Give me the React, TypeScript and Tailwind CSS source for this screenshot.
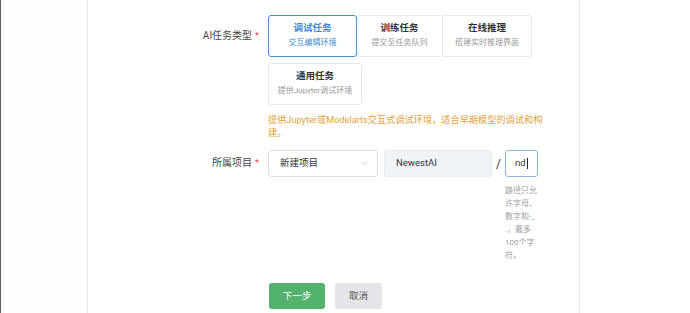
import React from 'react';

const font = { fontFamily: 'Roboto, "Noto Sans CJK SC", sans-serif' };

function TaskCard({
  title,
  desc,
  active,
  className = '',
}: {
  title: string;
  desc: string;
  active?: boolean;
  className?: string;
}) {
  return (
    <div
      className={`relative flex h-[42px] flex-col items-center rounded-[3px] border bg-white pt-[6px] ${
        active ? 'z-10 border-[#4a8fcf]' : 'border-[#e6e8ec]'
      } ${className}`}
    >
      <div className={`text-[9.5px] font-bold leading-[12px] ${active ? 'text-[#3a8ad6]' : 'text-[#333]'}`}>{title}</div>
      <div className={`mt-[4px] whitespace-nowrap text-[8px] leading-[10px] ${active ? 'text-[#3a8ad6]' : 'text-[#999]'}`}>
        {desc}
      </div>
    </div>
  );
}

function Label({ text }: { text: string }) {
  return (
    <div className="flex w-[180px] shrink-0 justify-end pr-[9px] text-[10px] leading-[14px] text-[#444]">
      <span>{text}</span>
      <span className="ml-[3px] text-[9px] text-[#e5484d]">*</span>
    </div>
  );
}

export default function App() {
  return (
    <div className="flex h-[313px] w-[690px] overflow-hidden bg-white" style={font}>
      <div className="w-px shrink-0 bg-[#5a5a5a]" />
      <div className="w-[86px] shrink-0 bg-[#fdfdfd]" />
      <div className="w-[493px] shrink-0 border-x border-[#e6e6e6] bg-white pt-[15px]">
        {/* task type */}
        <div className="flex items-start">
          <div className="mt-[14px]">
            <Label text="AI任务类型" />
          </div>
          <div className="flex flex-col">
            <div className="flex">
              <TaskCard title="调试任务" desc="交互编辑环境" active className="w-[89px]" />
              <TaskCard title="训练任务" desc="提交至任务队列" className="-ml-px w-[87px]" />
              <TaskCard title="在线推理" desc="搭建实时推理界面" className="-ml-px w-[90px]" />
            </div>
            <div className="mt-[6px] flex">
              <TaskCard title="通用任务" desc="提供Jupyter调试环境" className="w-[94px]" />
            </div>
            <p className="mt-[8px] whitespace-nowrap text-[9.2px] leading-[13px] text-[#e3a23a]">
              提供Jupyter或Modelarts交互式调试环境，适合早期模型的调试和构
              <br />
              建。
            </p>
          </div>
        </div>

        {/* project */}
        <div className="mt-[11px] flex items-start">
          <div className="mt-[6px]">
            <Label text="所属项目" />
          </div>
          <div className="flex items-start">
            <div className="flex h-[27px] w-[110px] items-center justify-between rounded-[3px] border border-[#dcdfe6] pl-[11px] pr-[9px] text-[9.5px] text-[#333]">
              <span>新建项目</span>
              <svg width="7" height="5" viewBox="0 0 7 5" fill="none">
                <path d="M0.5 0.8l3 3 3-3" stroke="#c0c4cc" strokeWidth="0.9" />
              </svg>
            </div>
            <div className="ml-[6px] flex h-[27px] w-[108px] items-center rounded-[3px] border border-[#e9edf2] bg-[#eff2f6] px-[11px] text-[9.5px] text-[#333]">
              NewestAI
            </div>
            <div className="flex h-[27px] w-[13px] items-center justify-center text-[12px] text-[#333]">/</div>
            <div className="flex flex-col">
              <div className="flex h-[27px] w-[33px] items-center rounded-[3px] border border-[#8fb6dc] pl-[9px] text-[9.5px] text-[#333]">
                nd<span className="ml-px inline-block h-[11px] w-px bg-[#222]" />
              </div>
              <p className="mt-[7px] whitespace-nowrap text-[8px] leading-[13px] text-[#a0a0a0]">
                路径只允
                <br />
                许字母、
                <br />
                数字和-_
                <br />
                .，最多
                <br />
                100个字
                <br />
                符。
              </p>
            </div>
          </div>
        </div>

        {/* buttons */}
        <div className="mt-[21px] flex gap-[10px] pl-[181px]">
          <button className="h-[26px] w-[56px] rounded-[3px] bg-[#53b26e] text-[9.5px] text-white">下一步</button>
          <button className="h-[26px] w-[47px] rounded-[3px] bg-[#e3e5e8] text-[9.5px] text-[#555]">取消</button>
        </div>
      </div>
      <div className="flex-1 bg-white" />
    </div>
  );
}
